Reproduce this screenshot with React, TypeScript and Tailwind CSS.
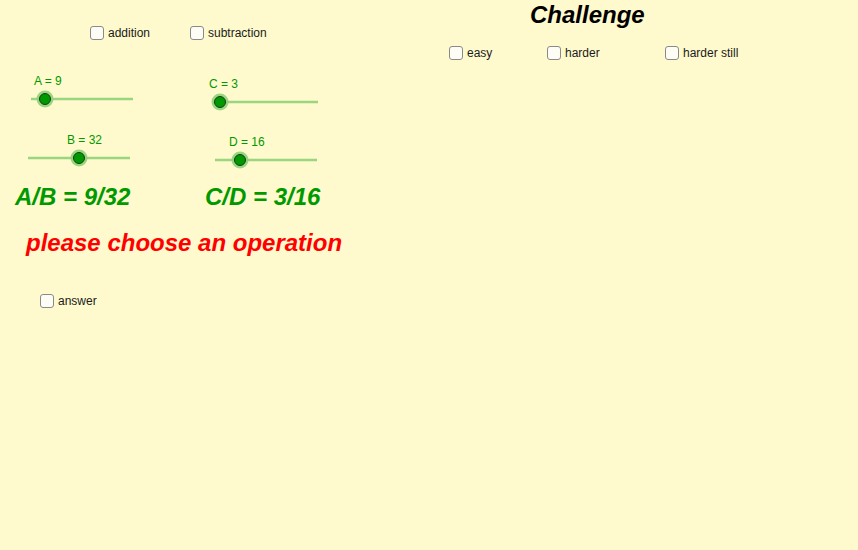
const font = { fontFamily: '"Liberation Sans", Arial, sans-serif' }

function Check({ label, className = '' }: { label: string; className?: string }) {
  return (
    <div className={`flex items-center gap-[4px] ${className}`}>
      <span className="block w-[14px] h-[14px] shrink-0 rounded-[3px] border-[1.5px] border-[#8a8a8a] bg-[#fdfdf6]" />
      <span className="text-[12px] leading-none text-[#1a1a1a] whitespace-nowrap">{label}</span>
    </div>
  )
}

// GeoGebra-style slider: a label above a thin line with a knob
function Slider({ label, labelClass, lineClass, len, knob }: { label: string; labelClass: string; lineClass: string; len: number; knob: number }) {
  return (
    <div className="flex flex-col">
      <span className={`text-[12px] leading-[14px] text-[#009900] ${labelClass}`}>{label}</span>
      <svg className={`block ${lineClass}`} width={len + 8} height={22}>
        <line x1={4} y1={11} x2={4 + len} y2={11} stroke="#99d67f" strokeWidth={2.5} />
        <circle cx={4 + knob} cy={11} r={8.5} fill="#8fd27a" opacity={0.9} />
        <circle cx={4 + knob} cy={11} r={5.5} fill="#009900" stroke="#1a3a1a" strokeWidth={1} />
      </svg>
    </div>
  )
}

export default function App() {
  return (
    <div className="flex w-[858px] h-[550px] bg-[#fffacd] overflow-hidden" style={font}>
      <div className="flex flex-col w-[360px] pt-[26px] pl-[15px]">
        <div className="flex pl-[75px]">
          <Check label="addition" className="w-[100px]" />
          <Check label="subtraction" />
        </div>

        <div className="grid grid-cols-[175px_1fr] items-start gap-y-[20px] mt-[34px]">
          <Slider label="A = 9" labelClass="ml-[19px]" lineClass="ml-[12px]" len={102} knob={14} />
          <div className="mt-[3px]">
            <Slider label="C = 3" labelClass="ml-[19px]" lineClass="ml-[19px]" len={105} knob={7} />
          </div>
          <Slider label="B = 32" labelClass="ml-[52px]" lineClass="ml-[9px]" len={102} knob={51} />
          <div className="mt-[2px]">
            <Slider label="D = 16" labelClass="ml-[39px]" lineClass="ml-[21px]" len={102} knob={25} />
          </div>
        </div>

        <div className="flex mt-[12px] text-[24px] font-bold italic text-[#009900] leading-[28px]">
          <span className="w-[190px]">A/B = 9/32</span>
          <span>C/D = 3/16</span>
        </div>

        <p className="mt-[18px] ml-[11px] text-[24px] font-bold italic text-[#ff0000] leading-[28px] whitespace-nowrap">
          please choose an operation
        </p>

        <Check label="answer" className="mt-[37px] ml-[25px]" />
      </div>

      <div className="flex flex-col pt-[1px] pl-[89px]">
        <h1 className="ml-[81px] text-[24px] font-bold italic text-black leading-[28px]">Challenge</h1>
        <div className="flex mt-[17px]">
          <Check label="easy" className="w-[98px]" />
          <Check label="harder" className="w-[118px]" />
          <Check label="harder still" />
        </div>
      </div>
    </div>
  )
}
